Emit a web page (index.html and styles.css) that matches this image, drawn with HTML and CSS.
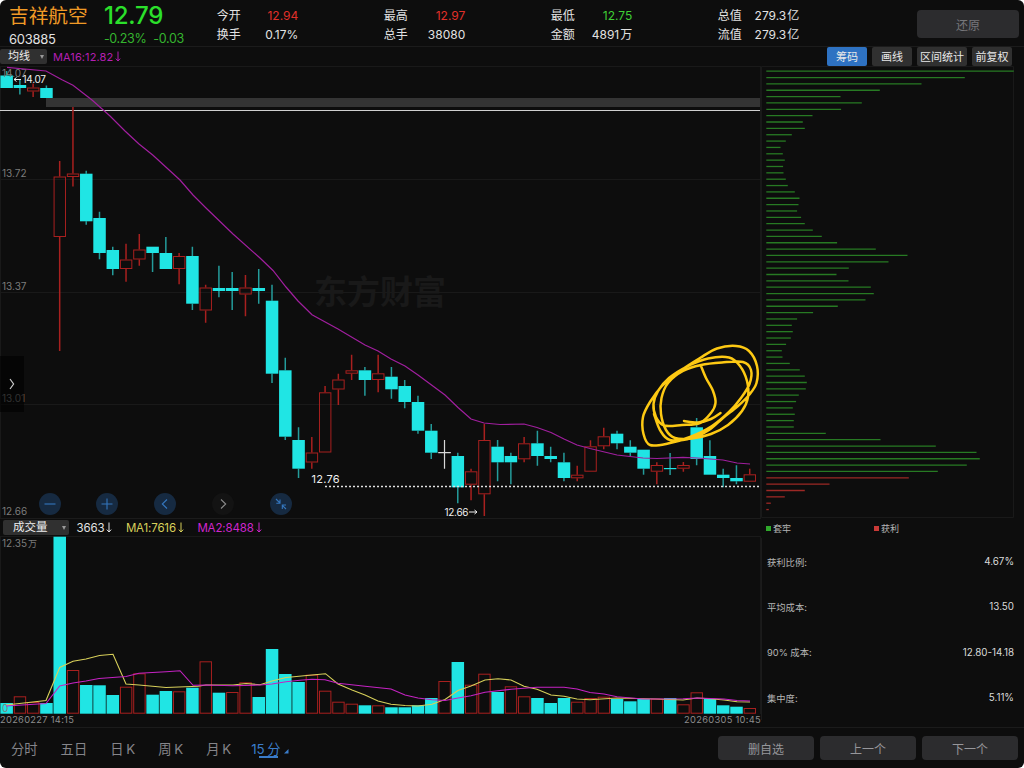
FILE: index.html
```html
<!DOCTYPE html>
<html lang="zh-CN">
<head>
    <meta charset="UTF-8">
    <meta name="viewport" content="width=device-width, initial-scale=1.0">
    <title>吉祥航空 603885</title>
    <link rel="stylesheet" href="styles.css">
</head>
<body>
    <div class="app">
        <header class="header">
            <div class="stock">
                <div class="stock-name">吉祥航空</div>
                <div class="stock-code">603885</div>
            </div>
            <div class="price">
                <div class="price-now">12.79</div>
                <div class="price-change"><span>-0.23%</span><span>-0.03</span></div>
            </div>
            <div class="stats">
                <div class="stat"><span>今开</span><span class="red">12.94</span></div>
                <div class="stat"><span>最高</span><span class="red">12.97</span></div>
                <div class="stat"><span>最低</span><span class="green">12.75</span></div>
                <div class="stat"><span>总值</span><span>279.3<i>亿</i></span></div>
                <div class="stat"><span>换手</span><span>0.17%</span></div>
                <div class="stat"><span>总手</span><span>38080</span></div>
                <div class="stat"><span>金额</span><span>4891<i>万</i></span></div>
                <div class="stat"><span>流值</span><span>279.3<i>亿</i></span></div>
            </div>
            <button class="btn btn-restore">还原</button>
        </header>

        <div class="toolbar">
            <div class="select">均线<span class="caret"></span></div>
            <div class="ma-label">MA16:12.82<svg class="arrow" viewBox="0 0 6 11"><path d="M3 0.5V10M0.8 7.6L3 10L5.2 7.6"/></svg></div>
            <div class="tools">
                <button class="tool active">筹码</button>
                <button class="tool">画线</button>
                <button class="tool tool-wide">区间统计</button>
                <button class="tool">前复权</button>
            </div>
        </div>

        <div class="main">
            <div class="left">
                <div class="kline">
                    <svg id="kline" width="761" height="452" viewBox="0 66 761 452"></svg>
                    <div class="drawer">
                        <svg width="6" height="12" viewBox="0 0 6 12"><path d="M1 1L4.6 6L1 11"/></svg>
                    </div>
                    <div class="controls">
                        <div class="round"><svg viewBox="0 0 22 22"><path d="M5.5 11H16.5"/></svg></div>
                        <div class="round"><svg viewBox="0 0 22 22"><path d="M5.5 11H16.5M11 5.5V16.5"/></svg></div>
                        <div class="round"><svg viewBox="0 0 22 22"><path d="M13 6.5L8.3 11L13 15.5"/></svg></div>
                        <div class="round off"><svg viewBox="0 0 22 22"><path d="M9 6.5L13.7 11L9 15.5"/></svg></div>
                        <div class="round"><svg viewBox="0 0 22 22"><path d="M6 6L10 10M10 6.4V10.2H6.3M16 16L12.3 12.3M12.3 16V12H16"/></svg></div>
                    </div>
                </div>
                <div class="vol-bar">
                    <div class="select select-vol">成交量<span class="caret"></span></div>
                    <div class="vol-item">3663<svg class="arrow" viewBox="0 0 6 11"><path d="M3 0.5V10M0.8 7.6L3 10L5.2 7.6"/></svg></div>
                    <div class="vol-item yellow">MA1:7616<svg class="arrow" viewBox="0 0 6 11"><path d="M3 0.5V10M0.8 7.6L3 10L5.2 7.6"/></svg></div>
                    <div class="vol-item magenta">MA2:8488<svg class="arrow" viewBox="0 0 6 11"><path d="M3 0.5V10M0.8 7.6L3 10L5.2 7.6"/></svg></div>
                </div>
                <svg id="volume" width="761" height="178" viewBox="0 536 761 178"></svg>
                <div class="dates"><span>20260227 14:15</span><span>20260305 10:45</span></div>
            </div>

            <div class="right">
                <svg id="chips" width="254" height="452" viewBox="761 66 254 452"></svg>
                <div class="legend">
                    <span class="legend-item"><b class="dot dot-green"></b>套牢</span>
                    <span class="legend-item"><b class="dot dot-red"></b>获利</span>
                </div>
                <div class="info">
                    <div class="info-row"><span>获利比例:</span><em>4.67%</em></div>
                    <div class="info-row"><span>平均成本:</span><em>13.50</em></div>
                    <div class="info-row"><span>90% 成本:</span><em>12.80-14.18</em></div>
                    <div class="info-row"><span>集中度:</span><em>5.11%</em></div>
                </div>
            </div>
        </div>

        <footer class="footer">
            <nav class="tabs">
                <span class="tab">分时</span>
                <span class="tab">五日</span>
                <span class="tab">日 K</span>
                <span class="tab">周 K</span>
                <span class="tab">月 K</span>
                <span class="tab current">15 分<svg width="5" height="5" viewBox="0 0 5 5"><path d="M4.5 0V4.5H0Z"/></svg></span>
            </nav>
            <button class="btn">删自选</button>
            <button class="btn">上一个</button>
            <button class="btn">下一个</button>
        </footer>
    </div>

    <script src="script.js"></script>
</body>
</html>
```

FILE: styles.css
```css
:root {
    --bg: #0d0d0d;
    --line: #1b1b1b;
    --cyan: #20e5e4;
    --red: #a8201f;
    --blue: #2e72c2;
    --magenta: #b51fb3;
    --yellow: #d8d05a;
}

* {
    margin: 0;
    padding: 0;
    box-sizing: border-box;
}

body {
    background: #fff;
    font-family: Inter, "Noto Sans CJK SC", sans-serif;
    color: #e2e2e2;
}

i, em {
    font-style: normal;
}

button {
    border: none;
    font-family: inherit;
}

.app {
    width: 1024px;
    height: 768px;
    background: var(--bg);
    border-radius: 6px;
    overflow: hidden;
    display: flex;
    flex-direction: column;
}

.red { color: #e0302a; }
.green { color: #3fcf35; }
.yellow { color: var(--yellow); }
.magenta { color: #cf26cd; }

/* header */
.header {
    height: 47px;
    display: flex;
    border-bottom: 1px solid var(--line);
    padding-left: 9px;
}

.stock {
    width: 95px;
    padding-top: 1px;
    white-space: nowrap;
}

.stock-name {
    font-size: 19.7px;
    line-height: 30px;
    color: #f09a26;
}

.stock-code {
    font-size: 13px;
    line-height: 16px;
    letter-spacing: -0.3px;
}

.price {
    width: 113px;
    padding-top: 1px;
}

.price-now {
    font-size: 24px;
    line-height: 30px;
    font-weight: 500;
    letter-spacing: -0.2px;
    color: #2be02b;
}

.price-change {
    display: flex;
    gap: 7px;
    font-size: 12.5px;
    line-height: 16px;
    letter-spacing: -0.35px;
    color: #35b52f;
}

.stats {
    display: grid;
    grid-template-columns: repeat(4, 81.5px);
    grid-template-rows: 19px 19px;
    column-gap: 85.5px;
    padding-top: 6px;
    width: 701px;
}

.stat {
    display: flex;
    justify-content: space-between;
    font-size: 12px;
    line-height: 19px;
    white-space: nowrap;
}

.stat i {
    margin-left: 1px;
}

.btn {
    width: 96px;
    height: 24px;
    border-radius: 4px;
    background: #2c2c2e;
    color: #96969a;
    font-size: 12px;
}

.btn-restore {
    width: 102px;
    height: 28px;
    margin: 10px 5px 0 0;
    flex-shrink: 0;
    color: #77777b;
}

/* toolbar over the candles */
.toolbar {
    height: 19px;
    display: flex;
    align-items: center;
}

.select {
    width: 47px;
    height: 15px;
    padding-left: 8px;
    border-radius: 2px;
    background: #303030;
    color: #eee;
    font-size: 11px;
    line-height: 17px;
    display: flex;
    align-items: center;
    gap: 10px;
}

.caret {
    border: 2.5px solid transparent;
    border-top: 4px solid #999;
    border-bottom: none;
}

.arrow {
    width: 6px;
    height: 11px;
    margin-left: 2px;
    fill: none;
    stroke: currentColor;
    stroke-width: 1;
}

.ma-label {
    margin-left: 6px;
    display: flex;
    align-items: center;
    font-size: 11px;
    letter-spacing: 0.1px;
    color: var(--magenta);
}

.tools {
    display: flex;
    gap: 5px;
    margin-left: auto;
    margin-right: 12px;
}

.tool {
    width: 40px;
    height: 19px;
    border-radius: 2px;
    background: #303030;
    color: #e8e8e8;
    font-size: 11px;
    line-height: 20px;
    white-space: nowrap;
}

.tool-wide {
    width: 50px;
}

.tool.active {
    background: var(--blue);
}

.main {
    display: flex;
    height: 661px;
}

.left {
    width: 761px;
}

.left svg, .right svg {
    display: block;
}

.kline {
    position: relative;
    height: 452px;
}

/* drawer handle lies over the candles */
.drawer {
    position: absolute;
    left: 0;
    top: 290px;
    width: 24px;
    height: 56px;
    background: rgba(0, 0, 0, 0.6);
    display: flex;
    align-items: center;
    justify-content: center;
}

.drawer svg {
    fill: none;
    stroke: #ccc;
    stroke-width: 1.2;
}

.controls {
    position: absolute;
    left: 38.5px;
    bottom: 3px;
    display: flex;
    gap: 35.8px;
}

.round {
    width: 22px;
    height: 22px;
    border-radius: 50%;
    background: #162a41;
}

.round svg {
    fill: none;
    stroke: #3476bd;
    stroke-width: 1.1;
}

.round.off {
    background: #131313;
}

.round.off svg {
    stroke: #8a8a8a;
}

/* volume */
.vol-bar {
    height: 18px;
    display: flex;
    align-items: center;
    font-size: 11.5px;
    border-top: 1px solid var(--line);
}

.select-vol {
    width: 66px;
    margin-left: 3px;
    padding-left: 10px;
    gap: 14px;
    font-size: 11.5px;
    margin-right: 7.5px;
}

.vol-item {
    display: flex;
    align-items: center;
    margin-right: 13.5px;
    letter-spacing: -0.15px;
}

.dates {
    display: flex;
    justify-content: space-between;
    font-size: 9.3px;
    line-height: 12px;
    letter-spacing: 0.3px;
    color: #8c8c8c;
}

/* svg parts */
.axis {
    font-size: 10px;
    fill: #7c7c7c;
}

.mark {
    font-size: 10px;
    fill: #f0f0f0;
}

.mark-price {
    font-size: 11px;
}

.watermark {
    font-family: "Noto Sans CJK SC", sans-serif;
    font-size: 33px;
    font-weight: 700;
    fill: #191919;
}

.grid { stroke: #191919; }
.up { fill: none; stroke: var(--red); }
.up-wick { stroke: var(--red); stroke-width: 1.5; }
.down { fill: var(--cyan); }
.down-wick { stroke: #249c9b; stroke-width: 1.5; }
.flat-wick { stroke: #d8d8d8; stroke-width: 1.2; }
.ma { fill: none; stroke: #a01f9e; stroke-width: 1.2; }
.ma-yellow { fill: none; stroke: var(--yellow); stroke-width: 1.1; }
.ma-magenta { fill: none; stroke: #c523c3; stroke-width: 1.1; }
.pen { fill: none; stroke: #fdc913; stroke-width: 2.5; stroke-linecap: round; stroke-linejoin: round; }
.chip { stroke: #277a23; stroke-width: 1.3; }
.chip-red { stroke: #9c2825; stroke-width: 1.3; }

/* right panel */
.right {
    width: 254px;
}

.legend {
    display: flex;
    height: 20px;
    padding-left: 5px;
    font-size: 9px;
    color: #b5b5b5;
}

.legend-item {
    display: flex;
    align-items: center;
    gap: 2px;
    width: 108px;
}

.dot {
    width: 5px;
    height: 5px;
}

.dot-green { background: #2fa82b; }
.dot-red { background: #c93a37; }

.info {
    padding: 1px 1px 0 5px;
    border-left: 1px solid var(--line);
}

.info-row {
    display: flex;
    align-items: center;
    justify-content: space-between;
    height: 45.3px;
    font-size: 9.3px;
    color: #b5b5b5;
}

.info-row em {
    color: #dadada;
    font-size: 9.8px;
}

/* bottom bar */
.footer {
    flex: 1;
    display: flex;
    align-items: center;
    gap: 6px;
    padding: 0 6px 0 11px;
    border-top: 1px solid var(--line);
}

.tabs {
    flex: 1;
    display: flex;
    gap: 23px;
    font-size: 13.3px;
    word-spacing: -1px;
    color: #85858a;
    white-space: nowrap;
}

.current {
    position: relative;
    margin-left: -3px;
    color: #3a7cc9;
}

.current svg {
    display: inline-block;
    margin-left: 3px;
    fill: currentColor;
}

.current::after {
    content: "";
    position: absolute;
    left: 8px;
    bottom: 0;
    width: 19px;
    height: 2px;
    background: #3a7cc9;
}
```

FILE: script.js
```js
// [type, high, bodyTop, bodyBottom, low]
const candles = [
    ['d', 71, 75.5, 88, 88], ['d', 79, 85, 88, 94.5], ['u', 83.5, 87.5, 91.5, 97], ['d', 85.5, 88, 98, 98],
    ['u', 161, 176.5, 237, 351], ['u', 107, 173.5, 177, 186.5], ['d', 170.7, 173.7, 221.3, 224.7],
    ['d', 211.7, 218, 253, 259.3], ['d', 246.7, 250, 269, 275.3], ['u', 243.7, 259.5, 269, 281.7],
    ['u', 234, 249.5, 259.5, 265.7], ['d', 246.7, 246.7, 253, 272], ['d', 237, 253, 269, 269],
    ['u', 253, 256, 269, 284.3], ['d', 246.7, 256, 303.7, 310], ['u', 284.7, 287.5, 310.5, 322.7],
    ['d', 265.7, 288, 291, 297.3], ['d', 272, 288, 291, 310], ['u', 275, 287.5, 294.5, 316.3],
    ['d', 269, 288, 291, 303.7], ['d', 284.7, 300.7, 373.7, 383], ['d', 357.7, 370.3, 436.7, 440],
    ['d', 427.3, 440, 468.7, 478], ['u', 437, 452.5, 462.5, 468.7], ['u', 386, 392.3, 452.5, 452.5],
    ['u', 373.7, 379.5, 389.5, 405], ['u', 354.7, 370.3, 373.7, 380], ['d', 367, 370.3, 380, 395.7],
    ['u', 354.7, 373.3, 380, 392.3], ['d', 367, 376.7, 389.3, 398.7], ['d', 380, 386, 402, 408.3],
    ['d', 395.7, 402, 430.7, 433.7], ['d', 424, 430.7, 452.7, 459], ['f', 440, 452.7, 452.7, 468.7],
    ['d', 452.7, 456, 487.3, 503.3], ['u', 468.7, 471.3, 484.7, 500.3], ['u', 424, 440, 494.3, 516],
    ['d', 440, 446.7, 462.3, 481.3], ['d', 452.7, 456, 462.3, 484.3], ['u', 437, 443.3, 459.3, 462.3],
    ['d', 430.7, 443.3, 456, 465.7], ['d', 446.7, 456, 459, 462.3], ['d', 452.7, 462.3, 478, 481.3],
    ['u', 465.7, 474.7, 478.3, 481.3], ['u', 440.3, 446.3, 471.7, 471.7], ['u', 427.7, 436.3, 446.3, 449.3],
    ['d', 430.7, 433.7, 443.3, 449.3], ['d', 440.3, 446.7, 452.7, 456], ['d', 449.7, 449.7, 468.7, 474.7],
    ['u', 462.3, 465, 471.7, 484.3], ['d', 453, 468, 469.2, 475], ['u', 462, 465, 468.7, 471.7],
    ['d', 418, 427.3, 459, 465.3], ['d', 440.3, 456, 474.7, 474.7], ['d', 468.7, 474.7, 478, 487.3],
    ['d', 465.3, 478, 481.3, 484.3], ['u', 468.7, 474.3, 481.7, 481.7]
];

// [type, top]
const volumes = [
    ['d', 703], ['u', 696.3], ['u', 702], ['d', 703], ['d', 536.7], ['u', 670], ['d', 685], ['d', 685.3],
    ['d', 695], ['u', 686.7], ['u', 673.3], ['d', 694.7], ['d', 691], ['u', 691.3], ['d', 687.7], ['u', 661.3],
    ['d', 692.7], ['u', 692], ['u', 682.3], ['d', 697], ['d', 649], ['d', 674], ['d', 682], ['u', 674.7],
    ['u', 690.7], ['u', 701.7], ['u', 703.7], ['d', 705.3], ['u', 705.3], ['d', 707.3], ['d', 707.3],
    ['d', 705.3], ['d', 698], ['u', 681], ['d', 662], ['u', 684.7], ['u', 673.7], ['d', 692], ['u', 686.3],
    ['u', 696.3], ['d', 698], ['d', 703], ['d', 698], ['u', 701.7], ['u', 698], ['u', 696.7], ['d', 699],
    ['d', 701.3], ['d', 699], ['u', 698.7], ['d', 698], ['u', 704.3], ['u', 692.3], ['d', 699], ['d', 705.3],
    ['d', 706.7], ['u', 708]
];

const ma16 = '7,67.3 46,71 62,79.7 73,85.3 92,100 110,116 125,131 139,144 153,155.3 180,180 193,195 206,208 233,234 260,258 273,270.5 286,287 298,301 312,314.7 338,329 365,345 378,351 391,359 405,366 418,375 445,395 458,407.5 471,419 484,423 500,424.5 524,424 537,427.5 551,432.5 564,439 577,445 590,448.5 617,455 643,458 657,458.5 683,457.3 697,458 723,460 737,463 750,464';
const volMa1 = '6,705 46,700.5 59.7,667.5 73,661.3 86,659 99.5,655.5 113,654.3 126,684 139,685 166,687.5 198,686.3 206,685 233,685 246,683.5 260,684.7 272,681 286,677.5 312,675 325.5,673.7 338,684 352,690 365,695 378,701 391,704.3 405,705.5 418,706 432,704.3 445,699.5 458,690.5 471,686 485,680 498,678.7 511,680 524,686.3 537,689.3 551,695 564,696.3 577,699 590,699.7 617,698 656,699 683,700 697,698 710,698.7 724,700 737,701.7 750,702';
const volMa2 = '6,706 46,703.5 59.7,686 73,683 86,681 99,678.5 126,676.5 139,673.3 166,671.7 180,670.7 193,685.3 206,685 233,685.7 260,685 272,684 286,681.7 300,680.3 312,679.3 325,679.7 338,683.3 365,686.3 391,689 405,695 418,698 432,699.7 445,700.5 458,698 471,695.7 485,692.3 511,689.3 537,687.3 564,687.3 577,689 590,692.5 604,694 617,696.7 643,699 683,698.7 697,698 724,699 737,700.5 750,701';

// chip widths from the highest price to the lowest, the last six are in profit
const chips = [
    248, 199, 155.7, 114, 74.7, 96, 75.3, 46.7, 37, 39, 26, 20, 14.7, 17, 19, 17.3, 17.7, 20, 22, 29, 33.7,
    32.7, 31.3, 35.3, 39, 47, 56, 71.3, 110, 141.7, 122.7, 83, 70.7, 82.7, 105, 108, 99.7, 72, 47.3, 31.3, 26,
    27, 25, 20.3, 16, 16.7, 24, 34, 39, 41, 40, 33, 30.3, 27, 29, 28, 28, 60, 114.7, 170, 210.7, 214, 201, 172,
    143, 63.7, 39, 19, 5, 3
];

// pen strokes drawn over the chart
const strokes = [
    [[701, 366], [706, 378], [713, 391], [715.5, 403], [711, 413], [700, 423], [682, 425], [664, 425.5],
     [656, 417], [653.5, 404], [658, 391], [669, 378], [687, 366.5], [708, 358.5], [729, 357.5], [740, 366],
     [747, 381], [748, 397], [742, 411], [728, 425], [711, 434], [692, 438.5], [675, 438], [666, 430],
     [661, 414], [661.5, 398], [668, 383], [683, 371], [701, 365], [722, 362.5], [743, 362], [751, 370],
     [749.5, 384], [741, 398], [729, 412], [712, 426], [690, 437], [668, 443.5], [650, 445], [643.5, 434],
     [643, 417], [650, 402], [662, 386], [680, 371], [700, 358], [717, 348.5], [736, 346], [749, 351],
     [757, 366], [756.5, 383], [749, 395], [738, 406], [723, 418], [709, 430], [692, 438], [670, 440],
     [660, 430], [654, 414]],
    [[684, 421], [698, 422.5], [711, 419], [720.5, 413]]
];

const x0 = 6.6;
const step = 13.27;

function smooth(p) {
    let d = `M${p[0]}`;
    for (let i = 0; i < p.length - 1; i++) {
        const a = p[i - 1] || p[i], b = p[i], c = p[i + 1], e = p[i + 2] || c;
        d += `C${b[0] + (c[0] - a[0]) / 6},${b[1] + (c[1] - a[1]) / 6} ${c[0] - (e[0] - b[0]) / 6},${c[1] - (e[1] - b[1]) / 6} ${c}`;
    }
    return d;
}

function bar(type, x, top, bottom) {
    if (type === 'u') {
        return `<rect class="up" x="${x - 5.6}" y="${top + 0.5}" width="11.4" height="${Math.max(bottom - top - 1, 1)}"/>`;
    }
    return `<rect class="down" x="${x - 6.2}" y="${top}" width="12.5" height="${bottom - top}"/>`;
}

function drawKline() {
    let s = '<path class="grid" d="M0 66.5H761M0 179.5H760M0 292.5H760M0 404.5H760M0.5 66V518M760.5 66V518"/>';
    s += '<text class="watermark" x="314" y="304">东方财富</text>';
    s += '<rect x="46" y="98" width="714" height="9" fill="#343434"/>';
    s += '<path d="M0 110.5H760" stroke="#d0d0d0" stroke-width="1.2"/>';
    candles.forEach(([type, high, top, bottom, low], i) => {
        const x = x0 + step * i;
        if (type === 'f') {
            s += `<path class="flat-wick" d="M${x} ${high}V${low}M${x - 6.3} ${top}H${x + 6.3}"/>`;
            return;
        }
        const cls = type === 'u' ? 'up-wick' : 'down-wick';
        s += `<path class="${cls}" d="M${x} ${high}V${top}M${x} ${bottom}V${low}"/>` + bar(type, x, top, bottom);
    });
    ['14.07', '13.72', '13.37', '13.01', '12.66'].forEach((t, i) => {
        s += `<text class="axis" x="2" y="${[77, 177, 289.5, 402, 515][i]}">${t}</text>`;
    });
    s += `<polyline class="ma" points="${ma16}"/>`;
    s += '<path d="M325 486.5H760" stroke="#e0e0e0" stroke-width="1.4" stroke-dasharray="2 2"/>';
    s += '<text class="mark" x="22.5" y="83" textLength="23.5">14.07</text>';
    s += '<path d="M14 79.5H21M16.5 77.5L14 79.5L16.5 81.5" fill="none" stroke="#f0f0f0"/>';
    s += '<text class="mark mark-price" x="311.5" y="483.3" textLength="28">12.76</text>';
    s += '<text class="mark" x="444.5" y="516" textLength="24">12.66</text>';
    s += '<path d="M469 512H477M474.5 510L477 512L474.5 514" fill="none" stroke="#f0f0f0"/>';
    strokes.forEach(p => s += `<path class="pen" d="${smooth(p)}"/>`);
    document.getElementById('kline').innerHTML = s;
}

function drawVolume() {
    let s = '<path class="grid" d="M0 536.5H761M0.5 536V714M760.5 536V714"/>';
    s += '<text class="axis" x="2" y="547">12.35<tspan dx="1" font-size="9">万</tspan></text>';
    volumes.forEach(([type, top], i) => s += bar(type, x0 + step * i, top, 713.7));
    s += '<text class="axis" x="2" y="712">0</text>';
    s += `<polyline class="ma-yellow" points="${volMa1}"/><polyline class="ma-magenta" points="${volMa2}"/>`;
    document.getElementById('volume').innerHTML = s;
}

function drawChips() {
    let s = '<path class="grid" fill="none" d="M761.5 66.5H1013.5V517.5H761.5Z"/>';
    chips.forEach((w, i) => {
        const y = 71.2 + 6.353 * i;
        s += `<path class="${i > 63 ? 'chip-red' : 'chip'}" d="M766.3 ${y}h${w - 0.5}"/>`;
    });
    document.getElementById('chips').innerHTML = s;
}

drawKline();
drawVolume();
drawChips();
```
